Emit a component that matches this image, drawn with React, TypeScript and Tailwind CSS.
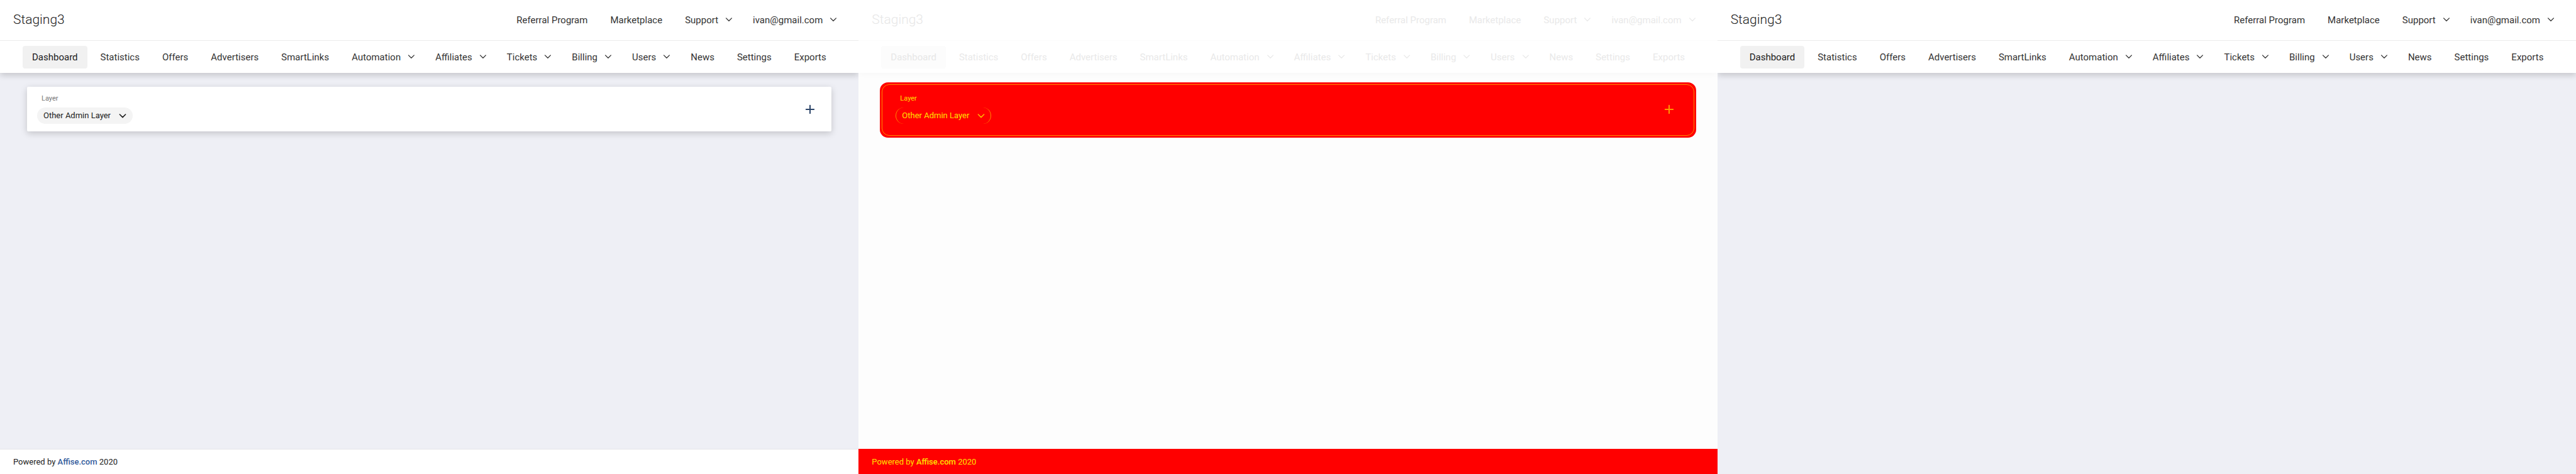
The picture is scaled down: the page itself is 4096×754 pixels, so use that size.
import { useId } from "react";

type Variant = "full" | "diff" | "plain";

type MenuItem = { label: string; menu?: boolean; active?: boolean };

const topLinks: MenuItem[] = [
  { label: "Referral Program" },
  { label: "Marketplace" },
  { label: "Support", menu: true },
  { label: "ivan@gmail.com", menu: true },
];

const navLinks: MenuItem[] = [
  { label: "Dashboard", active: true },
  { label: "Statistics" },
  { label: "Offers" },
  { label: "Advertisers" },
  { label: "SmartLinks" },
  { label: "Automation", menu: true },
  { label: "Affiliates", menu: true },
  { label: "Tickets", menu: true },
  { label: "Billing", menu: true },
  { label: "Users", menu: true },
  { label: "News" },
  { label: "Settings" },
  { label: "Exports" },
];

function Chevron({ bold = false, className = "" }: { bold?: boolean; className?: string }) {
  return (
    <svg
      viewBox="0 0 12 8"
      aria-hidden="true"
      className={`h-2 w-3 shrink-0 ${className}`}
      fill="none"
      stroke="currentColor"
      strokeWidth={bold ? 1.6 : 1.3}
      strokeLinecap="round"
      strokeLinejoin="round"
    >
      <path d={bold ? "M1.4 2 6 6.6 10.6 2" : "M1.6 0.9 6 5.3l4.4-4.4"} />
    </svg>
  );
}

function Item({ item, faded }: { item: MenuItem; faded: boolean }) {
  const tone = item.active
    ? faded
      ? "bg-[#fcfcfc] text-[#e7e7e7]"
      : "bg-[#f1f1f1] text-[#1a1a1a]"
    : faded
      ? "text-[#e9e9e9]"
      : "text-[#333333]";
  const base = `flex h-9 items-center rounded-sm text-[15px] whitespace-nowrap ${tone}`;
  if (item.menu) {
    return (
      <button type="button" className={`${base} gap-[11px] pr-[11px] pl-[15px]`}>
        {item.label}
        <Chevron />
      </button>
    );
  }
  return (
    <a href="#" className={`${base} px-[15px]`}>
      {item.label}
    </a>
  );
}

function Header({ variant }: { variant: Variant }) {
  const faded = variant === "diff";
  return (
    <header
      className={`bg-white ${faded ? "shadow-[0_4px_8px_rgba(0,0,0,0.02)]" : "shadow-[0_4px_9px_rgba(0,0,0,0.17)]"}`}
    >
      <div
        className={`flex h-[65px] items-center justify-between border-b pr-[23px] pl-[21px] ${faded ? "border-[#fcfcfc]" : "border-[#ebebeb]"}`}
      >
        <div className={`text-[21px] font-light ${faded ? "text-[#e7e7e7]" : "text-[#212121]"}`}>
          Staging3
        </div>
        <div className="flex gap-[6px]">
          {topLinks.map((item) => (
            <Item key={item.label} item={item} faded={faded} />
          ))}
        </div>
      </div>
      <nav className="flex h-[51px] items-center gap-[6px] px-9 pt-px">
        {navLinks.map((item) => (
          <Item key={item.label} item={item} faded={faded} />
        ))}
      </nav>
    </header>
  );
}

function LayerCard({ diff }: { diff: boolean }) {
  const id = useId();
  const card = (
    <div
      className={`flex h-[71px] items-center justify-between rounded-xs pr-[26px] pl-4 ${diff ? "" : "bg-white shadow-[0_3px_11px_rgba(0,0,0,0.19)]"}`}
    >
      <div className="flex flex-col items-start gap-1.5 pb-px">
        <label
          htmlFor={id}
          className={`ml-[7px] text-[11px] leading-4 ${diff ? "text-[#ffe000]" : "text-[#757575]"}`}
        >
          Layer
        </label>
        <div
          className={`relative flex items-center rounded-full ${diff ? "text-[#ffb400]" : "bg-[#f4f4f4] text-[#1a1a1a]"}`}
        >
          <select
            id={id}
            className={`h-[26px] w-[152px] appearance-none rounded-full bg-transparent text-[13px] ${diff ? "border-x border-[#ff8c00] pl-[9px] text-[#ffe000]" : "pl-[10px]"}`}
          >
            <option>Other Admin Layer</option>
          </select>
          <Chevron bold className="pointer-events-none absolute right-[10px]" />
        </div>
      </div>
      <button
        type="button"
        aria-label="Add"
        className={diff ? "text-[#ff9a00]" : "text-[#2b4468]"}
      >
        <svg
          viewBox="0 0 16 16"
          className="size-4"
          stroke="currentColor"
          strokeWidth="2"
          strokeLinecap="round"
        >
          <path d="M8 1.8v12.4M1.8 8h12.4" />
        </svg>
      </button>
    </div>
  );
  if (!diff) return <div className="mx-[43px] mt-[22px]">{card}</div>;
  return (
    <div className="mx-[34px] mt-[15px] rounded-[13px] bg-[#ff0000] p-[3px]">
      <div className="rounded-xl border border-[#ff8800] px-[5px] pt-[3px] pb-1.5">{card}</div>
    </div>
  );
}

function Footer({ diff }: { diff: boolean }) {
  return (
    <footer
      className={`mt-auto flex h-10 items-center border-t px-[21px] text-[13px] ${diff ? "border-[#ff0000] bg-[#ff0000] text-[#ffe000]" : "border-[#e4e4e9] bg-white text-[#212121]"}`}
    >
      <p>
        Powered by{" "}
        <a href="#" className={diff ? "font-medium" : "font-medium text-[#335c9c]"}>
          Affise.com
        </a>{" "}
        2020
      </p>
    </footer>
  );
}

function Screen({ variant }: { variant: Variant }) {
  const diff = variant === "diff";
  return (
    <section
      className={`flex min-w-0 flex-col overflow-hidden ${diff ? "bg-[#fdfdfd]" : "bg-[#eeeff5]"}`}
    >
      <Header variant={variant} />
      {variant !== "plain" && (
        <>
          <LayerCard diff={diff} />
          <Footer diff={diff} />
        </>
      )}
    </section>
  );
}

export default function App() {
  return (
    <main className="grid min-h-screen grid-cols-3 font-[Roboto,sans-serif]">
      <Screen variant="full" />
      <Screen variant="diff" />
      <Screen variant="plain" />
    </main>
  );
}
